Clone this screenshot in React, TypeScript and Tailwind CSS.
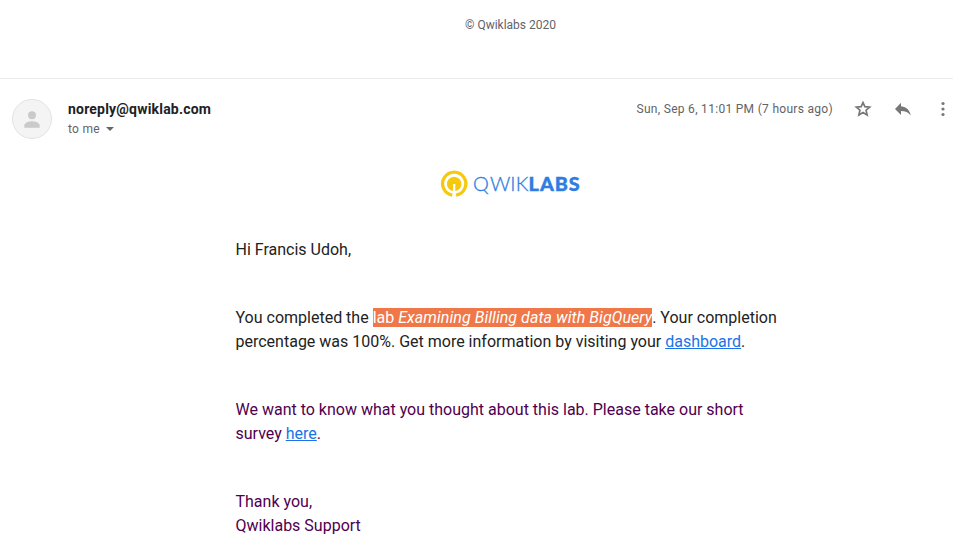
export default function App() {
  return (
    <div className="h-[534px] w-[972px] overflow-hidden bg-white font-['Roboto',sans-serif] text-[#222222]">
      <div className="flex h-[79px] w-[953px] justify-center border-b border-[#ececec] pl-[68px] pt-[17px] text-xs leading-4 text-[#5f6368]">
        <span>© Qwiklabs 2020</span>
      </div>
      <header className="flex h-[85px] items-start pl-3 pt-5">
        <svg className="h-10 w-10 shrink-0" viewBox="0 0 40 40">
          <circle cx="20" cy="20" r="19.5" fill="#f4f4f4" stroke="#e2e2e2" />
          <circle cx="20" cy="16.300" r="4" fill="#cacaca" />
          <path d="M12.300 28.800v-2.300c0-2.700 4.500-4.200 7.700-4.200s7.700 1.500 7.700 4.200v2.300z" fill="#cacaca" />
        </svg>
        <div className="ml-4 flex flex-col">
          <span className="text-sm font-bold leading-5 tracking-[0.2px] text-[#202124]">noreply@qwiklab.com</span>
          <span className="flex items-center text-xs leading-5 tracking-[0.3px] text-[#5f6368]">to me<i className="ml-1.5 border-x-4 border-t-4 border-x-transparent border-t-[#666]" /></span>
        </div>
        <span className="ml-auto text-xs leading-5 tracking-[0.3px] text-[#5f6368]">Sun, Sep 6, 11:01 PM (7 hours ago)</span>
        <svg className="ml-5 h-5 w-5" viewBox="0 0 20 20" fill="none" stroke="#777" strokeWidth="1.700"><path d="M10 3.500l1.850 4.200 4.800.4-3.600 3.130 1.100 4.700L10 13.500l-4.150 2.430 1.100-4.700-3.600-3.130 4.800-.4z" /></svg>
        <svg className="ml-5 h-5 w-5" viewBox="0 0 20 20" fill="#777"><path d="M8 7.300V3.800L2 9.900l6 6v-3.800c4.300 0 7.400 1.400 9.800 4.500C16.900 11.800 14 8 8 7.300z" /></svg>
        <svg className="ml-5 mr-[19px] h-5 w-5" viewBox="0 0 20 20" fill="#777"><circle cx="10" cy="4.500" r="1.600" /><circle cx="10" cy="10" r="1.600" /><circle cx="10" cy="15.500" r="1.600" /></svg>
      </header>
      <main className="pl-[235.500px] text-base leading-6">
        <svg className="ml-[199.500px] h-[40px] w-[150px]" viewBox="435 164 150 40">
          <path d="M452.300 195.100A11.600 11.600 0 1 1 456.100 195.100" fill="none" stroke="#f5ca0e" strokeWidth="3.300" />
          <path d="M450.500 190.300A7.300 7.300 0 1 1 457.900 190.300L455.300 191V184H453.100V191z" fill="#f5ca0e" />
          <g fill="#2f7de1" stroke="#2f7de1" className="font-['Lato',sans-serif]">
            <text x="473 490 510.300 515.700" y="190.500" fontSize="20" fontWeight="300" strokeWidth="0.300">QWIK</text>
            <text x="528.500 539.900 554.700 568.700" y="190.500" fontSize="19.800" fontWeight="900" strokeWidth="0.400">LABS</text>
          </g>
        </svg>
        <p className="mt-[34px]">Hi Francis Udoh,</p>
        <p className="mt-11">You completed the <span className="bg-[#ef7748] text-white">lab <em className="tracking-[0.058px]">Examining Billing data with BigQuery</em></span>. Your completion<br />percentage was 100%. Get more information by visiting your <a className="text-[#1a73e8] underline">dashboard</a>.</p>
        <p className="mt-11 text-[#500050]">We want to know what you thought about this lab. Please take our short<br />survey <a className="text-[#1a73e8] underline">here</a>.</p>
        <p className="mt-11 text-[#500050]">Thank you,<br />Qwiklabs Support</p>
      </main>
    </div>
  );
}
